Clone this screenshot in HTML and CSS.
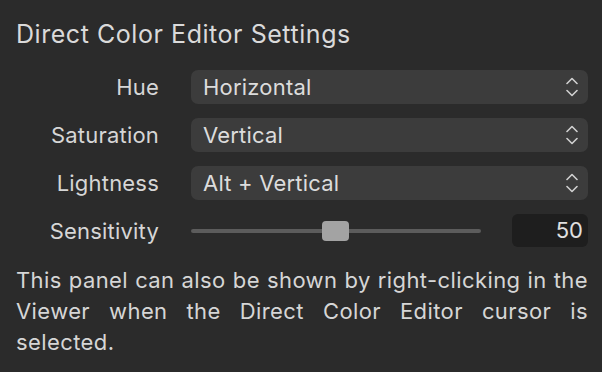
FILE: index.html
```html
<!DOCTYPE html>
<html>
<head>
<meta charset="utf-8">
<link rel="stylesheet" href="styles.css">
</head>
<body>
<div class="panel">
  <h1 class="title">Direct Color Editor Settings</h1>
  <div class="form">
    <div class="label">Hue</div>
    <div class="select"><span>Horizontal</span>
      <svg class="chev" width="12" height="24" viewBox="0 0 12 24"><path d="M1 8.5L6 3.5L11 8.5M1 15.5L6 20.5L11 15.5" fill="none" stroke="#d0d0d0" stroke-width="1.6" stroke-linecap="round" stroke-linejoin="round"/></svg>
    </div>
    <div class="label">Saturation</div>
    <div class="select"><span>Vertical</span>
      <svg class="chev" width="12" height="24" viewBox="0 0 12 24"><path d="M1 8.5L6 3.5L11 8.5M1 15.5L6 20.5L11 15.5" fill="none" stroke="#d0d0d0" stroke-width="1.6" stroke-linecap="round" stroke-linejoin="round"/></svg>
    </div>
    <div class="label">Lightness</div>
    <div class="select"><span>Alt + Vertical</span>
      <svg class="chev" width="12" height="24" viewBox="0 0 12 24"><path d="M1 8.5L6 3.5L11 8.5M1 15.5L6 20.5L11 15.5" fill="none" stroke="#d0d0d0" stroke-width="1.6" stroke-linecap="round" stroke-linejoin="round"/></svg>
    </div>
    <div class="label">Sensitivity</div>
    <div class="slider-row">
      <div class="track"><div class="thumb" style="left: 45%"></div></div>
      <div class="number">50</div>
    </div>
  </div>
  <p class="note">This panel can also be shown by right-clicking in the Viewer when the Direct Color Editor cursor is selected.</p>
</div>
</body>
</html>
```
FILE: styles.css
```css
html, body {
  margin: 0;
  background: #2b2b2b;
}
body {
  width: 602px;
  height: 372px;
  overflow: hidden;
  font-family: Inter, "Noto Sans", sans-serif;
  color: #d9d9d9;
}
.panel {
  padding: 18px 14px 0 16px;
}
.title {
  margin: 0;
  font-size: 25px;
  font-weight: 400;
  letter-spacing: 0.55px;
  line-height: 32px;
  color: #dadada;
}
.form {
  margin-top: 20px;
  display: grid;
  grid-template-columns: 143px 1fr;
  column-gap: 32px;
  row-gap: 14px;
  align-items: center;
}
.label {
  text-align: right;
  font-size: 22px;
  letter-spacing: 0.2px;
  color: #d6d6d6;
}
.select {
  height: 34px;
  background: #3c3c3c;
  border-radius: 7px;
  display: flex;
  align-items: center;
  justify-content: space-between;
  padding: 0 10px 0 12px;
  font-size: 22px;
  letter-spacing: 0.2px;
  color: #dcdcdc;
}
.chev {
  display: block;
}
.slider-row {
  display: flex;
  align-items: center;
  gap: 31px;
  height: 33px;
}
.track {
  flex: 1;
  height: 4px;
  border-radius: 2px;
  background: #5c5c5c;
  position: relative;
}
.thumb {
  position: absolute;
  top: -8px;
  width: 27px;
  height: 20px;
  border-radius: 4px;
  background: #a3a3a3;
}
.number {
  width: 76px;
  height: 33px;
  box-sizing: border-box;
  background: #1e1e1e;
  border-radius: 6px;
  font-size: 22px;
  text-align: right;
  padding-right: 5px;
  line-height: 33px;
  color: #e0e0e0;
}
.note {
  margin: 18px 0 0;
  font-size: 22px;
  letter-spacing: 0.4px;
  line-height: 31px;
  text-align: justify;
  color: #d6d6d6;
}
```
